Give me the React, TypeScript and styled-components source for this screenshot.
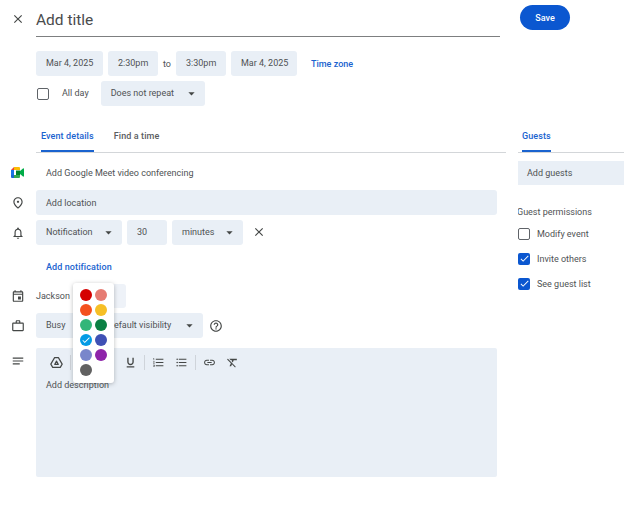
import React from 'react';
import styled, {createGlobalStyle} from 'styled-components';
import {
  MdClose, MdOutlinePlace, MdOutlineNotifications, MdOutlineEvent, MdWorkOutline, MdNotes,
  MdHelpOutline, MdFormatUnderlined, MdFormatListNumbered, MdFormatListBulleted, MdLink,
  MdFormatClear, MdFormatBold, MdFormatItalic, MdArrowDropDown, MdCheck,
} from 'react-icons/md';

const GlobalStyle = createGlobalStyle`
  html, body {
    margin: 0;
    background: #fff;
    overflow: hidden;
  }
  body {
    font-family: Roboto, "Liberation Sans", sans-serif;
    font-size: 9px;
    color: #4f5254;
  }
`;

const Page = styled.div`
  width: 624px;
  height: 505px;
  overflow: hidden;
  display: grid;
  grid-template-columns: 518px 106px;
  grid-template-rows: 122px 1fr;
`;

const Header = styled.div`
  display: flex;
  flex-direction: column;
`;

const Row = styled.div`
  display: flex;
  align-items: center;
  gap: 5px;
  padding-left: 36px;
  position: relative;
`;

const Gutter = styled.span`
  position: absolute;
  left: 0;
  top: 0;
  bottom: 0;
  width: 36px;
  display: flex;
  align-items: center;
  justify-content: center;
  font-size: 14px;
  color: #444746;
  padding-right: 1px;
  box-sizing: border-box;
`;

const TitleBox = styled.div`
  width: 464px;
  height: 37px;
  box-sizing: border-box;
  border-bottom: 1px solid #7d7f80;
  font-size: 15.5px;
  line-height: 41px;
  color: #4a4c4d;
`;

const DateRow = styled(Row)`
  margin-top: 14px;
  height: 25px;
`;

const RepeatRow = styled(Row)`
  margin-top: 5px;
  height: 25px;
`;

const Chip = styled.div<{$w: number}>`
  width: ${p => p.$w}px;
  height: 25px;
  flex: none;
  box-sizing: border-box;
  background: #e9eff6;
  border-radius: 3px;
  display: flex;
  align-items: center;
  justify-content: space-between;
  padding: 0 6px 2px 10px;
  white-space: nowrap;
`;

const Caret = styled(MdArrowDropDown)`
  font-size: 15px;
  color: #444746;
  flex: none;
  margin-bottom: -2px;
`;

const To = styled.span`
  width: 8px;
  text-align: center;
`;

const Link = styled.span`
  color: #1a63cf;
  font-weight: 500;
  letter-spacing: 0.1px;
`;

const TimeZone = styled(Link)`
  margin-left: 9px;
  padding-top: 1px;
  letter-spacing: 0;
`;

const Box = styled.span<{$on?: boolean}>`
  width: 12px;
  height: 12px;
  flex: none;
  box-sizing: border-box;
  border-radius: 2px;
  border: ${p => (p.$on ? 'none' : '1px solid #5f6368')};
  background: ${p => (p.$on ? '#0b57d0' : '#fff')};
  color: #fff;
  display: flex;
  align-items: center;
  justify-content: center;
  font-size: 11px;
`;

const AllDayBox = styled(Box)`
  margin-left: 1px;
`;

const AllDay = styled.span`
  margin: 0 7px 2px 8px;
`;

const Tabs = styled.div`
  height: 31px;
  box-sizing: border-box;
  border-bottom: 1px solid #d3d6d9;
  display: flex;
  gap: 20px;
  padding-left: 5px;
`;

const EventTabs = styled(Tabs)`
  margin: 0 12px 0 36px;
`;

const Tab = styled.div<{$active?: boolean}>`
  height: 30px;
  box-sizing: border-box;
  padding-top: 9px;
  font-weight: 500;
  letter-spacing: 0.1px;
  color: ${p => (p.$active ? '#1a63cf' : '#5a5d5f')};
  border-bottom: 2px solid ${p => (p.$active ? '#1a63cf' : 'transparent')};
`;

const SaveCell = styled.div`
  padding: 5px 0 0 2px;
`;

const SaveButton = styled.button`
  width: 50px;
  height: 25px;
  border: none;
  border-radius: 13px;
  background: #0b57d0;
  color: #fff;
  font: 500 9px Roboto, sans-serif;
`;

const LeftColumn = styled.div`
  min-width: 0;
`;

const EventBody = styled.div`
  display: flex;
  flex-direction: column;
  gap: 5px;
  padding-top: 7px;
`;

const MeetRow = styled(Row)`
  height: 25px;
  padding-left: 46px;
`;

const Field = styled.div`
  width: 461px;
  height: 25px;
  box-sizing: border-box;
  background: #e9eff6;
  border-radius: 3px;
  padding-left: 10px;
  display: flex;
  align-items: center;
`;

const NotifRow = styled(Row)`
  height: 25px;
`;

const RemoveIcon = styled(MdClose)`
  margin: 0 0 2px 4px;
  font-size: 14px;
  color: #444746;
`;

const AddRow = styled(Row)`
  height: 29px;
  padding-top: 5px;
  box-sizing: border-box;
  padding-left: 46px;
`;

const CalendarRow = styled(Row)`
  height: 24px;
`;

const CalendarChip = styled(Chip)`
  background: #eef2f8;
  height: 24px;
`;

const BusyRow = styled(Row)`
  height: 25px;
`;

const HelpIcon = styled(MdHelpOutline)`
  margin-left: 1px;
  font-size: 14px;
  color: #444746;
  flex: none;
`;

const DescRow = styled(Row)`
  margin-top: 5px;
  align-items: flex-start;
`;

const DescGutter = styled(Gutter)`
  bottom: auto;
  height: 26px;
`;

const DescBox = styled.div`
  width: 461px;
  height: 129px;
  background: #e9eff6;
  border-radius: 2px;
`;

const Toolbar = styled.div`
  height: 28px;
  padding: 0 0 0 9px;
  display: flex;
  align-items: center;
`;

const ToolButton = styled.span`
  width: 23px;
  height: 23px;
  flex: none;
  display: flex;
  align-items: center;
  justify-content: center;
  font-size: 13px;
  color: #444746;
`;

const ToolSep = styled.span`
  width: 1px;
  height: 15px;
  margin: 0 2px;
  background: #cfd4da;
  flex: none;
`;

const DescText = styled.div`
  padding: 4px 0 0 10px;
`;

const Popover = styled.div`
  position: absolute;
  left: 73px;
  top: -1px;
  width: 41px;
  height: 100px;
  box-sizing: border-box;
  padding: 6px 7px;
  background: #fff;
  border-radius: 3px;
  box-shadow: 0 1px 4px rgba(60, 64, 67, 0.35);
  display: grid;
  grid-template-columns: 12px 12px;
  grid-auto-rows: 12px;
  gap: 3px;
  z-index: 2;
`;

const Dot = styled.span<{$color: string}>`
  width: 12px;
  height: 12px;
  border-radius: 50%;
  background: ${p => p.$color};
  color: #fff;
  display: flex;
  align-items: center;
  justify-content: center;
  font-size: 10px;
`;

const Side = styled.div`
  overflow: hidden;
`;

const GuestTabs = styled(Tabs)`
  padding-left: 4px;
`;

const GuestField = styled.div`
  width: 130px;
  height: 24px;
  margin-top: 8px;
  background: #e9eff6;
  padding-left: 9px;
  display: flex;
  align-items: center;
`;

const PermTitle = styled.div`
  margin: 21px 0 0 -1px;
  height: 12px;
  line-height: 12px;
`;

const PermRows = styled.div`
  margin-top: 3px;
  display: flex;
  flex-direction: column;
`;

const PermRow = styled.div`
  height: 25px;
  display: flex;
  align-items: center;
  gap: 7px;
`;

const colors = [
  '#d50000', '#e67c73', '#f4511e', '#f6bf26', '#33b679',
  '#0b8043', '#039be5', '#3f51b5', '#7986cb', '#8e24aa', '#616161',
];

function MeetIcon() {
  return (
    <svg width="13" height="11" viewBox="0 0 13 11">
      <path d="M3 0h5a1 1 0 0 1 1 1v2H3z" fill="#fbbc04" />
      <path d="M3 0v3H0z" fill="#ea4335" />
      <path d="M0 3h3v5H0z" fill="#1a73e8" />
      <path d="M0 8h3v3H1a1 1 0 0 1-1-1z" fill="#1967d2" />
      <path d="M3 8h6v2a1 1 0 0 1-1 1H3z" fill="#34a853" />
      <path d="M5 3.5h4V8H5z" fill="#00832d" />
      <path d="M9 4l3-2.5c.5-.3 1-.1 1 .5v7c0 .6-.5.8-1 .5L9 7z" fill="#00ac47" />
    </svg>
  );
}

function DriveIcon() {
  return (
    <svg width="13" height="13" viewBox="0 0 24 24" fill="none" stroke="#444746" strokeWidth="2.2" strokeLinejoin="round">
      <path d="M8.5 3h7L22.5 15l-3.5 6H5l-3.5-6z" />
      <path d="M12 9.5 8.8 15.5h6.4z" />
    </svg>
  );
}

export default function App() {
  return (
    <Page>
      <GlobalStyle />
      <Header>
        <Row>
          <Gutter><MdClose /></Gutter>
          <TitleBox>Add title</TitleBox>
        </Row>
        <DateRow>
          <Chip $w={67}>Mar 4, 2025</Chip>
          <Chip $w={50}>2:30pm</Chip>
          <To>to</To>
          <Chip $w={50}>3:30pm</Chip>
          <Chip $w={66}>Mar 4, 2025</Chip>
          <TimeZone>Time zone</TimeZone>
        </DateRow>
        <RepeatRow>
          <AllDayBox />
          <AllDay>All day</AllDay>
          <Chip $w={104}>Does not repeat <Caret /></Chip>
        </RepeatRow>
      </Header>
      <SaveCell>
        <SaveButton>Save</SaveButton>
      </SaveCell>
      <LeftColumn>
        <EventTabs>
          <Tab $active>Event details</Tab>
          <Tab>Find a time</Tab>
        </EventTabs>
        <EventBody>
          <MeetRow>
            <Gutter><MeetIcon /></Gutter>
            Add Google Meet video conferencing
          </MeetRow>
          <Row>
            <Gutter><MdOutlinePlace /></Gutter>
            <Field>Add location</Field>
          </Row>
          <NotifRow>
            <Gutter><MdOutlineNotifications /></Gutter>
            <Chip $w={86}>Notification <Caret /></Chip>
            <Chip $w={40}>30</Chip>
            <Chip $w={71}>minutes <Caret /></Chip>
            <RemoveIcon />
          </NotifRow>
          <AddRow><Link>Add notification</Link></AddRow>
          <CalendarRow>
            <Gutter><MdOutlineEvent /></Gutter>
            Jackson
            <CalendarChip $w={51} />
            <Popover>
              {colors.map((c, i) => (
                <Dot key={c} $color={c}>{i === 6 && <MdCheck />}</Dot>
              ))}
            </Popover>
          </CalendarRow>
          <BusyRow>
            <Gutter><MdWorkOutline /></Gutter>
            <Chip $w={57}>Busy</Chip>
            <Chip $w={105}>Default visibility <Caret /></Chip>
            <HelpIcon />
          </BusyRow>
          <DescRow>
            <DescGutter><MdNotes /></DescGutter>
            <DescBox>
              <Toolbar>
                <ToolButton><DriveIcon /></ToolButton>
                <ToolSep />
                <ToolButton><MdFormatBold /></ToolButton>
                <ToolButton><MdFormatItalic /></ToolButton>
                <ToolButton><MdFormatUnderlined /></ToolButton>
                <ToolSep />
                <ToolButton><MdFormatListNumbered /></ToolButton>
                <ToolButton><MdFormatListBulleted /></ToolButton>
                <ToolSep />
                <ToolButton><MdLink /></ToolButton>
                <ToolButton><MdFormatClear /></ToolButton>
              </Toolbar>
              <DescText>Add description</DescText>
            </DescBox>
          </DescRow>
        </EventBody>
      </LeftColumn>
      <Side>
        <GuestTabs>
          <Tab $active>Guests</Tab>
        </GuestTabs>
        <GuestField>Add guests</GuestField>
        <PermTitle>Guest permissions</PermTitle>
        <PermRows>
          <PermRow><Box />Modify event</PermRow>
          <PermRow><Box $on><MdCheck /></Box>Invite others</PermRow>
          <PermRow><Box $on><MdCheck /></Box>See guest list</PermRow>
        </PermRows>
      </Side>
    </Page>
  );
}
